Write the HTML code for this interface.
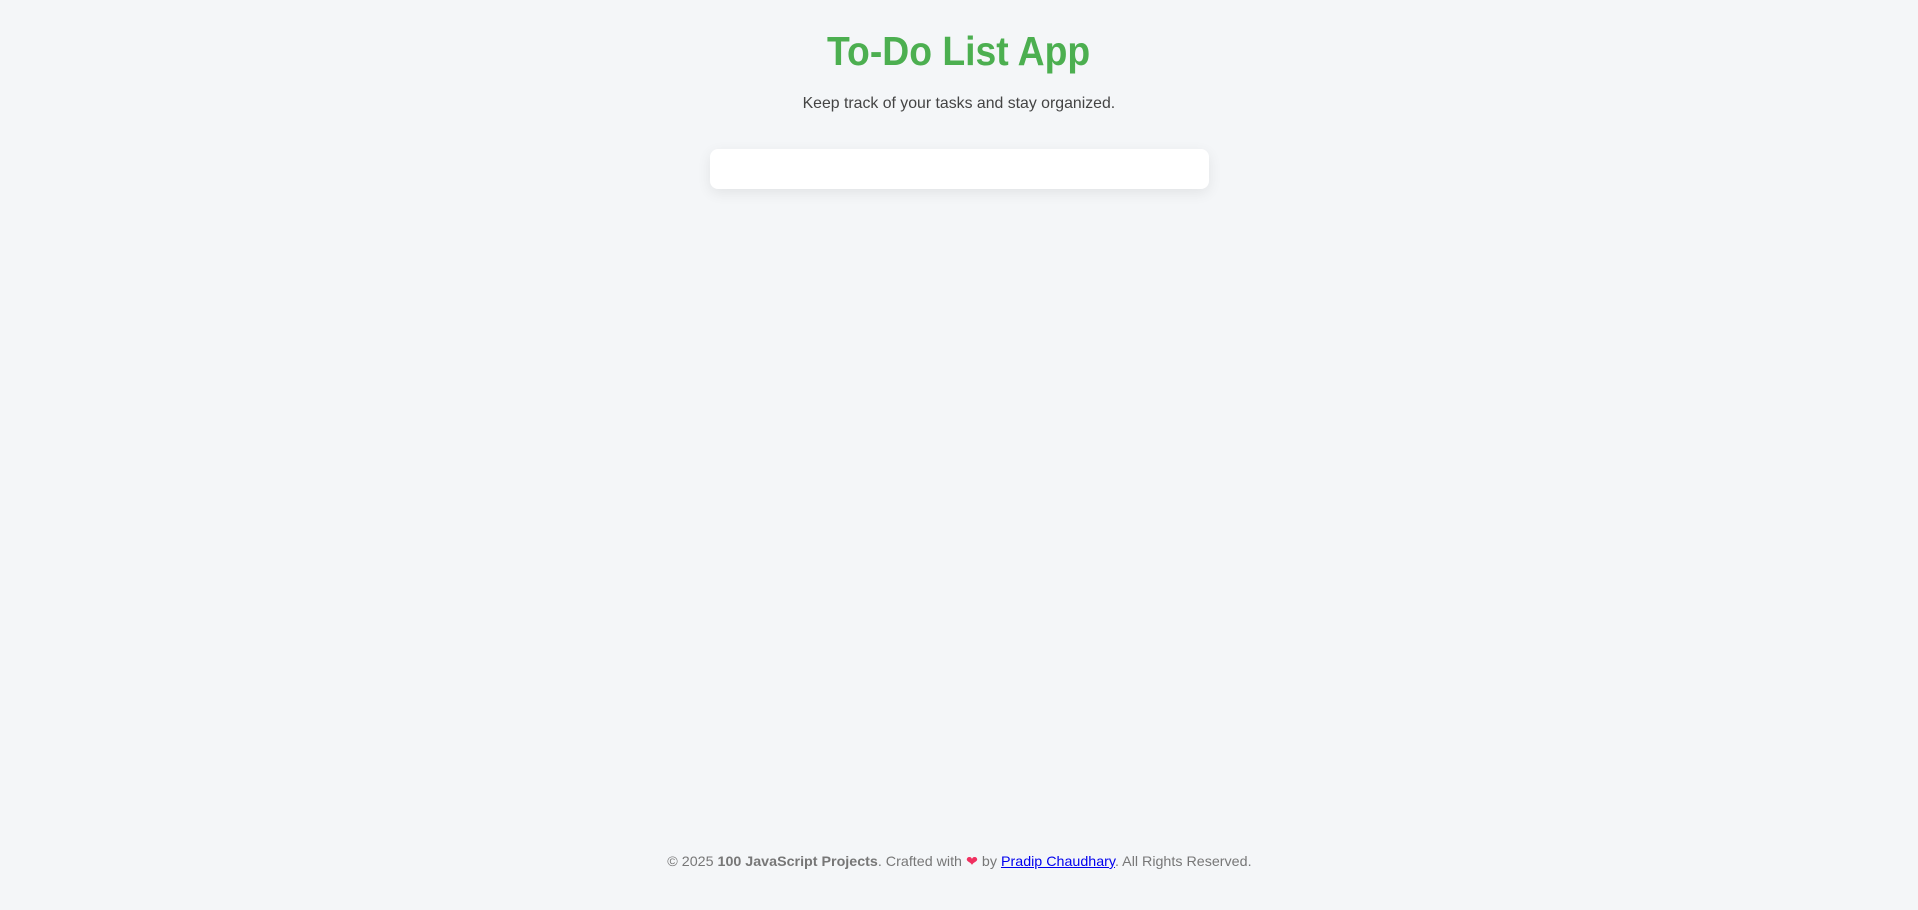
<!DOCTYPE html>
<html><head><style>
body{margin:0;width:1918px;height:910px;background:#f4f6f8;font-family:"Liberation Sans",sans-serif;position:relative;overflow:hidden}
.c{position:absolute;left:0;width:1918px;text-align:center;line-height:1.15}
h1{margin:0;top:28px;font-size:41px;color:#4caf50;font-weight:bold}
h1 span,.s span,.f span{display:inline-block;transform-origin:center}
.s{top:95px;font-size:16px;color:#444}
.card{position:absolute;left:710px;top:149px;width:499px;height:40px;background:#fff;border-radius:8px;box-shadow:0 4px 14px rgba(0,0,0,.08)}
.f{top:853px;font-size:14px;color:#777}
.f a{color:#00e}
</style></head><body>
<h1 class="c"><span style="transform:scaleX(.91)">To-Do List App</span></h1>
<div class="c s"><span style="transform:scaleX(.99)">Keep track of your tasks and stay organized.</span></div>
<div class="card"></div>
<div class="c f"><span style="transform:scaleX(1.02)">© 2025 <b>100 JavaScript Projects</b>. Crafted with <span style="color:#f03060">❤</span> by <a href="#">Pradip Chaudhary</a>. All Rights Reserved.</span></div>
</body></html>
